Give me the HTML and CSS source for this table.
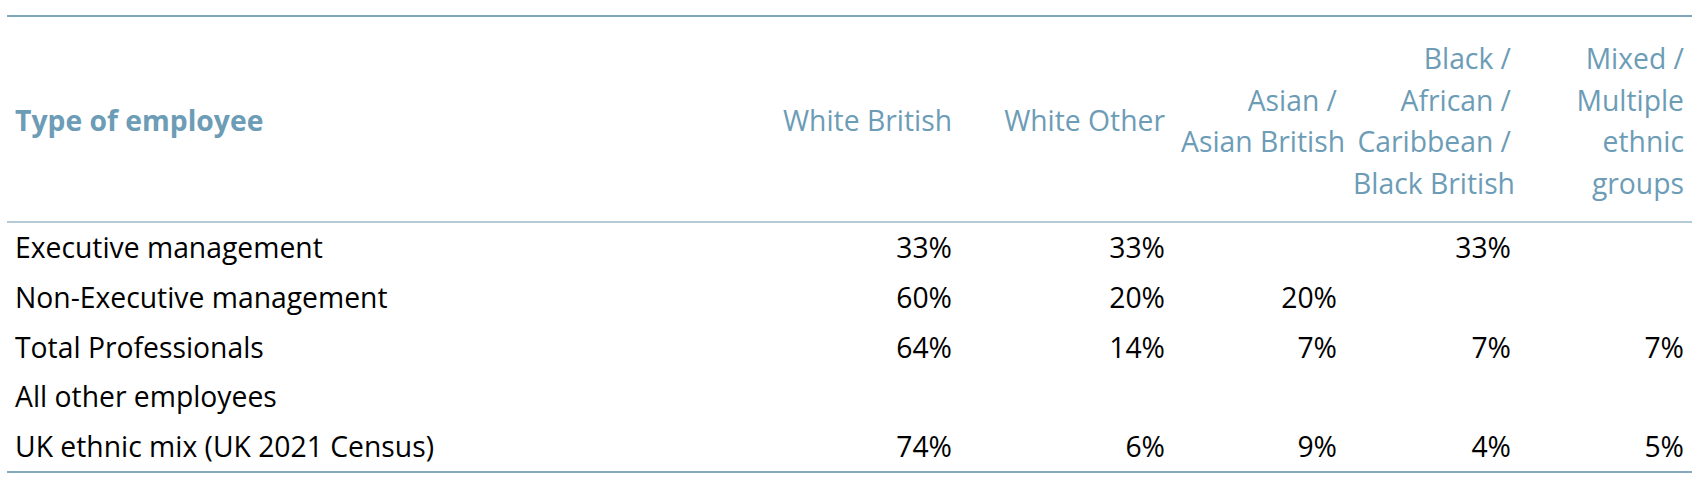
FILE: index.html
```html
<!DOCTYPE html>
<html lang="en">
<head>
<meta charset="utf-8">
<title>Ethnicity by type of employee</title>
<link rel="stylesheet" href="styles.css">
</head>
<body>
<div class="wrap">
  <table class="mix">
    <colgroup>
      <col class="c-type">
      <col class="c-wb">
      <col class="c-wo">
      <col class="c-as">
      <col class="c-bl">
      <col class="c-mx">
    </colgroup>
    <thead>
      <tr>
        <th class="h-type">Type of employee</th>
        <th class="h-num">White British</th>
        <th class="h-num">White Other</th>
        <th class="h-num">Asian /<br>Asian British</th>
        <th class="h-num">Black /<br>African /<br>Caribbean /<br>Black British</th>
        <th class="h-num">Mixed /<br>Multiple<br>ethnic<br>groups</th>
      </tr>
    </thead>
    <tbody>
      <tr>
        <td class="lbl">Executive management</td>
        <td class="num">33%</td>
        <td class="num">33%</td>
        <td class="num"></td>
        <td class="num">33%</td>
        <td class="num"></td>
      </tr>
      <tr>
        <td class="lbl">Non-Executive management</td>
        <td class="num">60%</td>
        <td class="num">20%</td>
        <td class="num">20%</td>
        <td class="num"></td>
        <td class="num"></td>
      </tr>
      <tr>
        <td class="lbl">Total Professionals</td>
        <td class="num">64%</td>
        <td class="num">14%</td>
        <td class="num">7%</td>
        <td class="num">7%</td>
        <td class="num">7%</td>
      </tr>
      <tr>
        <td class="lbl">All other employees</td>
        <td class="num"></td>
        <td class="num"></td>
        <td class="num"></td>
        <td class="num"></td>
        <td class="num"></td>
      </tr>
      <tr>
        <td class="lbl">UK ethnic mix (UK 2021 Census)</td>
        <td class="num">74%</td>
        <td class="num">6%</td>
        <td class="num">9%</td>
        <td class="num">4%</td>
        <td class="num">5%</td>
      </tr>
    </tbody>
  </table>
</div>
</body>
</html>
```

FILE: styles.css
```css
html, body {
  margin: 0;
  padding: 0;
  background: #ffffff;
}

.wrap {
  padding: 15px 7px 0 7px;
}

.mix {
  width: 1685px;
  table-layout: fixed;
  border-collapse: separate;
  border-spacing: 0;
  border-top: 2px solid #80a6bc;
  border-bottom: 2px solid #85aac0;
  font-family: "Open Sans", "Liberation Sans", sans-serif;
  font-size: 28.3px;
  line-height: 41.5px;
  color: #000;
}

.c-type { width: 760px; }
.c-wb   { width: 193px; }
.c-wo   { width: 213px; }
.c-as   { width: 172px; }
.c-bl   { width: 174px; }
.c-mx   { width: 173px; }

.mix th {
  color: #6c9cb6;
  padding: 21px 8px 17px 8px;
  border-bottom: 2px solid #b3cad7;
  vertical-align: middle;
  white-space: nowrap;
}

.h-type {
  text-align: left;
  font-weight: 700;
}

.h-num {
  text-align: right;
  font-weight: 400;
}

.mix td {
  padding: 4.4px 8px 3.7px 8px;
  white-space: nowrap;
  vertical-align: top;
}

.lbl {
  text-align: left;
}

.num {
  text-align: right;
}
```
